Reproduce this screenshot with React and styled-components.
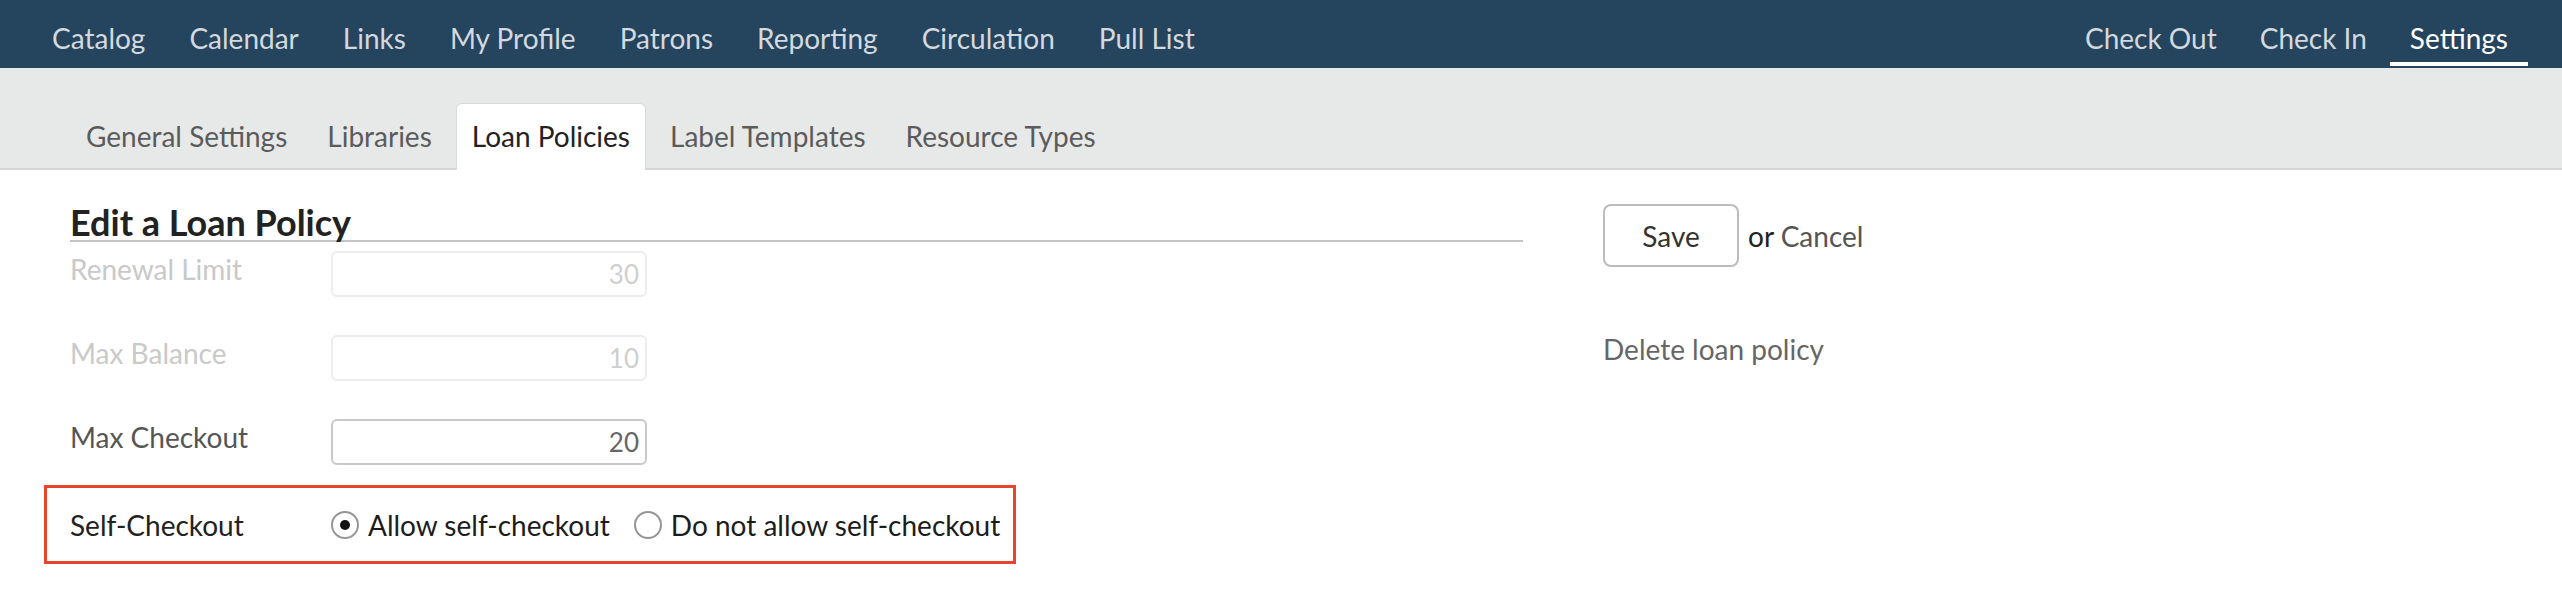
import React from 'react';
import styled, { createGlobalStyle } from 'styled-components';

const GlobalStyle = createGlobalStyle`
  html, body {
    margin: 0;
    padding: 0;
    background: #fff;
    font-family: Lato, "Open Sans", sans-serif;
  }
  * {
    box-sizing: border-box;
  }
`;

const TopNav = styled.nav`
  display: flex;
  justify-content: space-between;
  height: 68px;
  padding: 0 34px 2px 32px;
  background: #25445e;
`;

const NavGroup = styled.div`
  display: flex;
  gap: ${(p) => p.$gap || '3px'};
`;

const NavLink = styled.a`
  display: block;
  height: 66px;
  padding: 21px 20px 0;
  font-size: 28px;
  line-height: 34px;
  color: ${(p) => (p.$active ? '#ffffff' : '#d3d9de')};
  border-bottom: 4px solid ${(p) => (p.$active ? '#ffffff' : 'transparent')};
  text-decoration: none;
  white-space: nowrap;
`;

const TabBar = styled.div`
  display: flex;
  align-items: flex-end;
  gap: 8px;
  height: 102px;
  padding-left: 70px;
  background: #e7e9e8;
  border-bottom: 2px solid #d5d7d6;
`;

const Tab = styled.a`
  display: block;
  height: 67px;
  margin-bottom: -2px;
  padding: 15px 15px 0;
  font-size: 28px;
  line-height: 34px;
  color: ${(p) => (p.$active ? '#222' : '#5b5b5b')};
  background: ${(p) => (p.$active ? '#fff' : 'transparent')};
  border: 1px solid ${(p) => (p.$active ? '#d8dad9' : 'transparent')};
  border-bottom: none;
  border-radius: 6px 6px 0 0;
  text-decoration: none;
  white-space: nowrap;
`;

const Main = styled.main`
  display: flex;
  gap: 80px;
  padding: 34px 0 0 70px;
`;

const FormColumn = styled.section`
  width: 1453px;
`;

const Heading = styled.h2`
  margin: 0;
  font-size: 36px;
  font-weight: 700;
  line-height: 36px;
  color: #222;
  border-bottom: 2px solid #c4c4c4;
`;

const Fields = styled.div`
  display: flex;
  flex-direction: column;
  gap: 38px;
  padding-top: 9px;
`;

const Row = styled.div`
  display: flex;
  align-items: flex-start;
`;

const Label = styled.label`
  width: 261px;
  padding-top: 1px;
  font-size: 28px;
  line-height: 34px;
  color: ${(p) => (p.$disabled ? '#c9c9c9' : '#555')};
`;

const NumberInput = styled.input`
  width: 316px;
  height: 46px;
  padding: 0 6px;
  font-family: inherit;
  font-size: 26px;
  text-align: right;
  color: ${(p) => (p.disabled ? '#cfcfcf' : '#666')};
  background: #fff;
  border: 2px solid ${(p) => (p.disabled ? '#ededed' : '#c9c9c9')};
  border-radius: 6px;
  outline: none;
`;

const Highlight = styled.div`
  display: flex;
  align-items: center;
  width: 972px;
  height: 79px;
  margin: 20px 0 0 -26px;
  padding-left: 23px;
  border: 3px solid #e8432b;
`;

const RowLabel = styled.span`
  width: 261px;
  font-size: 28px;
  color: #222;
`;

const RadioGroup = styled.div`
  display: flex;
  align-items: center;
  gap: 24px;
`;

const RadioOption = styled.label`
  display: flex;
  align-items: center;
  gap: 9px;
  font-size: 28px;
  color: #1c1c1c;
  cursor: pointer;
`;

const Radio = styled.input.attrs({ type: 'radio' })`
  appearance: none;
  width: 28px;
  height: 28px;
  margin: 0;
  border: 2px solid #969696;
  border-radius: 50%;
  background: #fff;
  display: grid;
  place-items: center;

  &:checked::after {
    content: '';
    width: 10px;
    height: 10px;
    border-radius: 50%;
    background: #111;
  }
`;

const ActionColumn = styled.aside`
  display: flex;
  flex-direction: column;
  gap: 65px;
`;

const Actions = styled.div`
  display: flex;
  align-items: center;
  gap: 9px;
  font-size: 28px;
  color: #222;
`;

const SaveButton = styled.button`
  width: 136px;
  height: 63px;
  font-family: inherit;
  font-size: 28px;
  color: #333;
  background: #fff;
  border: 2px solid #bcbcbc;
  border-radius: 8px;
`;

const TextLink = styled.a`
  font-size: 28px;
  color: ${(p) => p.$color || '#555'};
  text-decoration: none;
`;

const leftNav = ['Catalog', 'Calendar', 'Links', 'My Profile', 'Patrons', 'Reporting', 'Circulation', 'Pull List'];
const rightNav = ['Check Out', 'Check In', 'Settings'];
const tabs = ['General Settings', 'Libraries', 'Loan Policies', 'Label Templates', 'Resource Types'];

const fields = [
  { label: 'Renewal Limit', value: '30', disabled: true },
  { label: 'Max Balance', value: '10', disabled: true },
  { label: 'Max Checkout', value: '20', disabled: false }
];

const App = () => {
  return (
    <>
      <GlobalStyle />
      <TopNav>
        <NavGroup $gap="4px">
          {leftNav.map((item) => (
            <NavLink key={item} href="#">{item}</NavLink>
          ))}
        </NavGroup>
        <NavGroup>
          {rightNav.map((item) => (
            <NavLink key={item} href="#" $active={item === 'Settings'}>{item}</NavLink>
          ))}
        </NavGroup>
      </TopNav>

      <TabBar>
        {tabs.map((tab) => (
          <Tab key={tab} href="#" $active={tab === 'Loan Policies'}>{tab}</Tab>
        ))}
      </TabBar>

      <Main>
        <FormColumn>
          <Heading>Edit a Loan Policy</Heading>
          <Fields>
            {fields.map((f) => (
              <Row key={f.label}>
                <Label $disabled={f.disabled}>{f.label}</Label>
                <NumberInput defaultValue={f.value} disabled={f.disabled} />
              </Row>
            ))}
          </Fields>
          <Highlight>
            <RowLabel>Self-Checkout</RowLabel>
            <RadioGroup>
              <RadioOption>
                <Radio name="self-checkout" defaultChecked />
                Allow self-checkout
              </RadioOption>
              <RadioOption>
                <Radio name="self-checkout" />
                Do not allow self-checkout
              </RadioOption>
            </RadioGroup>
          </Highlight>
        </FormColumn>

        <ActionColumn>
          <Actions>
            <SaveButton>Save</SaveButton>
            <span>
              or <TextLink href="#">Cancel</TextLink>
            </span>
          </Actions>
          <TextLink href="#" $color="#666">Delete loan policy</TextLink>
        </ActionColumn>
      </Main>
    </>
  );
};

export default App;
